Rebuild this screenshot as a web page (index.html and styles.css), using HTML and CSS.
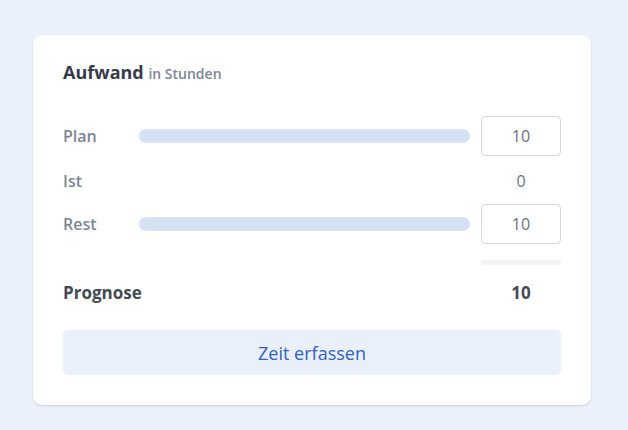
FILE: index.html
```html
<!DOCTYPE html>
<html lang="de">
<head>
<meta charset="utf-8">
<link rel="stylesheet" href="styles.css">
</head>
<body>
<div class="card">
  <h2 class="title">Aufwand <span class="unit">in Stunden</span></h2>
  <div class="rows">
    <div class="row">
      <span class="label">Plan</span>
      <div class="bar"></div>
      <div class="input">10</div>
    </div>
    <div class="row row-plain">
      <span class="label">Ist</span>
      <div class="spacer"></div>
      <div class="value">0</div>
    </div>
    <div class="row">
      <span class="label">Rest</span>
      <div class="bar"></div>
      <div class="input">10</div>
    </div>
  </div>
  <div class="divider-row"><div class="divider"></div></div>
  <div class="total">
    <span class="total-label">Prognose</span>
    <span class="total-value">10</span>
  </div>
  <button class="btn">Zeit erfassen</button>
</div>
</body>
</html>
```
FILE: styles.css
```css
html, body {
  margin: 0;
  padding: 0;
}
body {
  background: #ebf1fa;
  font-family: "Open Sans", "Noto Sans", sans-serif;
  width: 628px;
  height: 430px;
  padding: 35px 37px 0 33px;
  box-sizing: border-box;
}
.card {
  background: #ffffff;
  border-radius: 9px;
  box-shadow: 0 1px 2px rgba(40, 60, 100, 0.18);
  padding: 26px 30px 30px 30px;
  height: 370px;
  box-sizing: border-box;
}
.title {
  margin: 0;
  font-size: 18px;
  font-weight: 700;
  color: #363c47;
  line-height: 22px;
}
.unit {
  font-size: 14px;
  color: #7c8594;
  font-weight: 600;
}
.rows {
  margin-top: 31px;
  display: flex;
  flex-direction: column;
  gap: 8px;
}
.row {
  display: flex;
  align-items: center;
  height: 40px;
}
.row-plain {
  height: 30px;
  margin-top: 2px;
}
.label {
  width: 76px;
  font-size: 16px;
  font-weight: 600;
  color: #7c8594;
}
.bar, .spacer {
  flex: 1;
  height: 14px;
  border-radius: 7px;
  margin-right: 11px;
}
.bar {
  background: #d5e2f3;
}
.input {
  width: 80px;
  height: 40px;
  box-sizing: border-box;
  border: 1px solid #d8d8da;
  border-radius: 4px;
  display: flex;
  align-items: center;
  justify-content: center;
  font-size: 16px;
  color: #6b7381;
}
.value {
  width: 80px;
  text-align: center;
  font-size: 16px;
  color: #6b7381;
}
.divider-row {
  display: flex;
  justify-content: flex-end;
  margin-top: 16px;
}
.divider {
  width: 80px;
  height: 5px;
  border-radius: 2px;
  background: #f3f4f6;
}
.total {
  display: flex;
  justify-content: space-between;
  align-items: center;
  margin-top: 15px;
  height: 24px;
}
.total-label {
  font-size: 17px;
  font-weight: 700;
  color: #454b56;
}
.total-value {
  width: 80px;
  text-align: center;
  font-size: 17px;
  font-weight: 700;
  color: #454b56;
}
.btn {
  display: block;
  width: 100%;
  margin-top: 26px;
  height: 45px;
  border: none;
  border-radius: 5px;
  background: #e9f0fa;
  color: #3260c5;
  font-family: "Open Sans", "Noto Sans", sans-serif;
  font-size: 18px;
  font-weight: 400;
}
```
